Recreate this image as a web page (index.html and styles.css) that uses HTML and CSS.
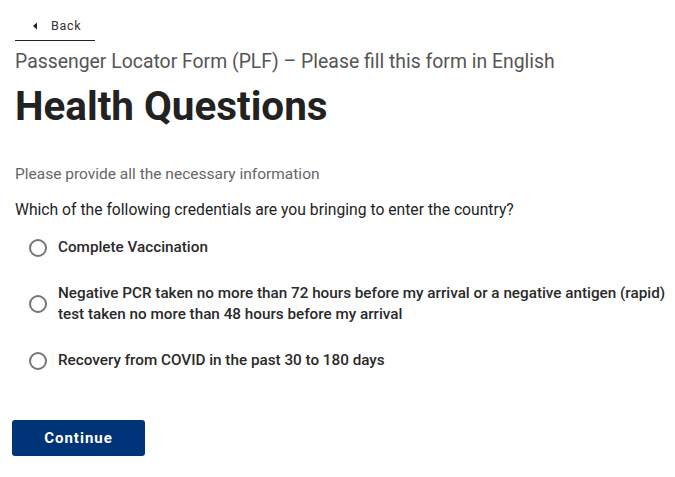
FILE: index.html
```html
<!DOCTYPE html>
<html lang="en">
<head>
<meta charset="utf-8">
<title>Health Questions</title>
<link rel="stylesheet" href="styles.css">
</head>
<body>
<main class="page">
  <a class="back" href="#">
    <svg class="back-icon" width="6" height="8" viewBox="0 0 6 8"><path d="M5 0.5 L1 4 L5 7.5 Z" fill="#222"/></svg>
    <span>Back</span>
  </a>
  <p class="subtitle">Passenger Locator Form (PLF) – Please fill this form in English</p>
  <h1 class="title">Health Questions</h1>
  <p class="hint">Please provide all the necessary information</p>
  <p class="question">Which of the following credentials are you bringing to enter the country?</p>
  <div class="options">
    <label class="option"><span class="radio"></span><span class="label">Complete Vaccination</span></label>
    <label class="option"><span class="radio"></span><span class="label">Negative PCR taken no more than 72 hours before my arrival or a negative antigen (rapid) test taken no more than 48 hours before my arrival</span></label>
    <label class="option"><span class="radio"></span><span class="label">Recovery from COVID in the past 30 to 180 days</span></label>
  </div>
  <button class="continue" type="button">Continue</button>
</main>
</body>
</html>
```
FILE: styles.css
```css
* { box-sizing: border-box; }
html, body { margin: 0; padding: 0; background: #fff; }
body { font-family: Roboto, "Noto Sans", Arial, sans-serif; color: #222; }
.page { padding: 13px 8px 0 15px; display: flex; flex-direction: column; align-items: flex-start; }
.back {
  display: flex; align-items: center; gap: 13px;
  width: 80px; height: 28px; padding-left: 17px; padding-bottom: 2px;
  border-bottom: 1px solid #222;
  text-decoration: none; color: #333;
  font-size: 12.5px; letter-spacing: 0.7px; font-weight: 400;
}
.back-icon { display: block; }
.subtitle { margin: 9px 0 0; font-size: 19.4px; line-height: 24px; color: #555; font-weight: 400; }
.title { margin: 8px 0 0; font-size: 40.4px; line-height: 50px; font-weight: 700; color: #222; }
.hint { margin: 31px 0 0; font-size: 15.5px; line-height: 22px; color: #666; }
.question { margin: 14px 0 0; font-size: 15.7px; line-height: 22px; color: #1e1e1e; font-weight: 400; }
.options { display: flex; flex-direction: column; gap: 25px; margin-top: 16px; padding-left: 14px; }
.option { display: flex; align-items: center; gap: 11px; font-size: 15.25px; line-height: 21px; color: #2a2a2a; font-weight: 500; }
.radio { flex: none; width: 18px; height: 18px; border: 2px solid #757575; border-radius: 50%; }
.label { max-width: 620px; }
.continue {
  margin: 49px 0 0 -3px; width: 133px; height: 36px;
  background: #003478; color: #fff; border: 0; border-radius: 3px;
  font-family: Roboto, Arial, sans-serif; font-size: 15px; font-weight: 700; letter-spacing: 1px;
}
```
